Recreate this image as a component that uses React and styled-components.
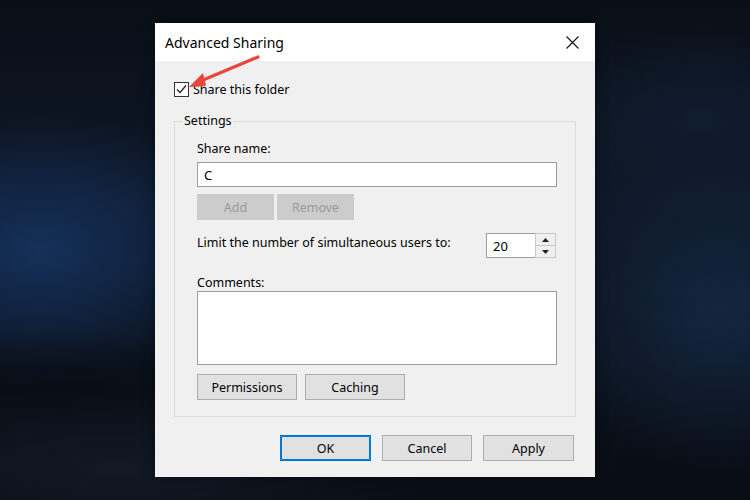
import React from 'react';
import styled, { createGlobalStyle } from 'styled-components';

const GlobalStyle = createGlobalStyle`
  html, body {
    margin: 0;
    padding: 0;
  }
  body {
    width: 750px;
    height: 500px;
    overflow: hidden;
    font-family: 'Noto Sans', 'Liberation Sans', sans-serif;
    background:
      radial-gradient(ellipse 420px 110px at 120px 470px, rgba(20, 26, 38, 0.9), transparent 75%),
      radial-gradient(ellipse 330px 90px at 60px 400px, #090d15 0%, rgba(9, 13, 21, 0) 80%),
      radial-gradient(ellipse 260px 170px at 40px 250px, #15305a 0%, rgba(21, 48, 90, 0) 80%),
      radial-gradient(ellipse 220px 200px at 720px 310px, #14263f 0%, rgba(20, 38, 63, 0) 80%),
      radial-gradient(ellipse 200px 120px at 700px 120px, #101d30 0%, rgba(16, 29, 48, 0) 80%),
      linear-gradient(180deg, #0a0f17 0%, #0e1828 40%, #0b121d 72%, #090d14 100%);
  }
`;

const Page = styled.div`
  padding: 23px 0 0 155px;
`;

const Dialog = styled.div`
  width: 440px;
  height: 454px;
  display: flex;
  flex-direction: column;
  background: #f0f0f0;
  box-shadow: 0 0 12px rgba(0, 0, 0, 0.4);
  font-size: 12.5px;
  color: #000;
`;

const TitleBar = styled.div`
  height: 38px;
  flex: none;
  background: #fff;
  display: flex;
  align-items: center;
  justify-content: space-between;
`;

const Title = styled.div`
  padding-left: 10px;
  font-size: 14px;
  color: #000;
`;

const CloseButton = styled.div`
  width: 46px;
  height: 38px;
  display: flex;
  align-items: center;
  justify-content: center;
`;

const Body = styled.div`
  flex: 1;
  position: relative;
  padding: 21px 19px 0 19px;
  display: flex;
  flex-direction: column;
`;

const CheckRow = styled.label`
  display: flex;
  align-items: center;
  gap: 4px;
  height: 15px;
`;

const CheckBox = styled.span`
  width: 13px;
  height: 13px;
  border: 1px solid #333;
  background: #fff;
  display: flex;
  align-items: center;
  justify-content: center;
`;

const GroupBox = styled.fieldset`
  margin: 16px 0 0 0;
  padding: 8px 18px 16px 22px;
  border: 1px solid #dcdcdc;
  display: flex;
  flex-direction: column;
  min-width: 0;
`;

const Legend = styled.legend`
  padding: 0 1px;
  margin-left: -14px;
  line-height: 16px;
`;

const FieldLabel = styled.div`
  line-height: 16px;
  margin-top: ${(p) => p.$top || 0}px;
`;

const TextInput = styled.div`
  height: 23px;
  margin-top: 5px;
  border: 1px solid #9c9c9c;
  background: #fff;
  display: flex;
  align-items: center;
  padding-left: 6px;
  font-size: 13px;
`;

const TextArea = styled.div`
  height: 72px;
  border: 1px solid #9c9c9c;
  background: #fff;
`;

const ButtonRow = styled.div`
  display: flex;
  gap: ${(p) => p.$gap || 3}px;
  margin-top: ${(p) => p.$top || 0}px;
`;

const Button = styled.div`
  box-sizing: border-box;
  width: ${(p) => p.$w || 77}px;
  height: 26px;
  display: flex;
  align-items: center;
  justify-content: center;
  background: ${(p) => (p.$disabled ? '#cccccc' : '#e1e1e1')};
  border: ${(p) =>
    p.$primary ? '2px solid #0078d7' : p.$disabled ? '1px solid #cccccc' : '1px solid #adadad'};
  color: ${(p) => (p.$disabled ? '#9a9a9a' : '#000')};
`;

const LimitRow = styled.div`
  display: flex;
  align-items: flex-start;
  justify-content: space-between;
  margin-top: 13px;
`;

const Spin = styled.div`
  display: flex;
  height: 25px;
  margin-right: 1px;
`;

const SpinInput = styled.div`
  width: 42px;
  border: 1px solid #9c9c9c;
  border-right: none;
  background: #fff;
  display: flex;
  align-items: center;
  padding-left: 6px;
  font-size: 13px;
`;

const SpinButtons = styled.div`
  width: 19px;
  border: 1px solid #c8c8c8;
  display: flex;
  flex-direction: column;
  background: #f0f0f0;
`;

const SpinArrow = styled.div`
  flex: 1;
  display: flex;
  align-items: center;
  justify-content: center;
  & + & {
    border-top: 1px solid #c8c8c8;
  }
`;

const Footer = styled.div`
  display: flex;
  justify-content: flex-end;
  gap: 11px;
  margin-top: 18px;
  padding-right: 2px;
`;

const Pointer = styled.svg`
  position: absolute;
  left: 19px;
  top: -6px;
`;

export default function App() {
  return (
    <Page>
      <GlobalStyle />
      <Dialog>
        <TitleBar>
          <Title>Advanced Sharing</Title>
          <CloseButton>
            <svg width="13" height="13" viewBox="0 0 13 13">
              <path d="M0.5 0.5 L12.5 12.5 M12.5 0.5 L0.5 12.5" stroke="#111" strokeWidth="1.1" />
            </svg>
          </CloseButton>
        </TitleBar>
        <Body>
          <CheckRow>
            <CheckBox>
              <svg width="11" height="11" viewBox="0 0 11 11">
                <path d="M1 5.5 L4 8.5 L10 1.5" fill="none" stroke="#222" strokeWidth="1.3" />
              </svg>
            </CheckBox>
            Share this folder
          </CheckRow>
          <GroupBox>
            <Legend>Settings</Legend>
            <FieldLabel $top={4}>Share name:</FieldLabel>
            <TextInput>C</TextInput>
            <ButtonRow $top={7}>
              <Button $disabled>Add</Button>
              <Button $disabled>Remove</Button>
            </ButtonRow>
            <LimitRow>
              <FieldLabel $top={2}>Limit the number of simultaneous users to:</FieldLabel>
              <Spin>
                <SpinInput>20</SpinInput>
                <SpinButtons>
                  <SpinArrow>
                    <svg width="7" height="4" viewBox="0 0 7 4">
                      <path d="M0 4 L3.5 0 L7 4 Z" fill="#222" />
                    </svg>
                  </SpinArrow>
                  <SpinArrow>
                    <svg width="7" height="4" viewBox="0 0 7 4">
                      <path d="M0 0 L3.5 4 L7 0 Z" fill="#222" />
                    </svg>
                  </SpinArrow>
                </SpinButtons>
              </Spin>
            </LimitRow>
            <FieldLabel $top={17}>Comments:</FieldLabel>
            <TextArea />
            <ButtonRow $top={9} $gap={8}>
              <Button $w={100}>Permissions</Button>
              <Button $w={100}>Caching</Button>
            </ButtonRow>
          </GroupBox>
          <Footer>
            <Button $w={91} $primary>OK</Button>
            <Button $w={90}>Cancel</Button>
            <Button $w={91}>Apply</Button>
          </Footer>
          <Pointer width="90" height="40" viewBox="0 0 90 40">
            <path d="M84 2 L22 28" stroke="#e8453c" strokeWidth="3.2" strokeLinecap="round" />
            <path d="M15 32 L29 18 L32 31 Z" fill="#e8453c" />
          </Pointer>
        </Body>
      </Dialog>
    </Page>
  );
}
